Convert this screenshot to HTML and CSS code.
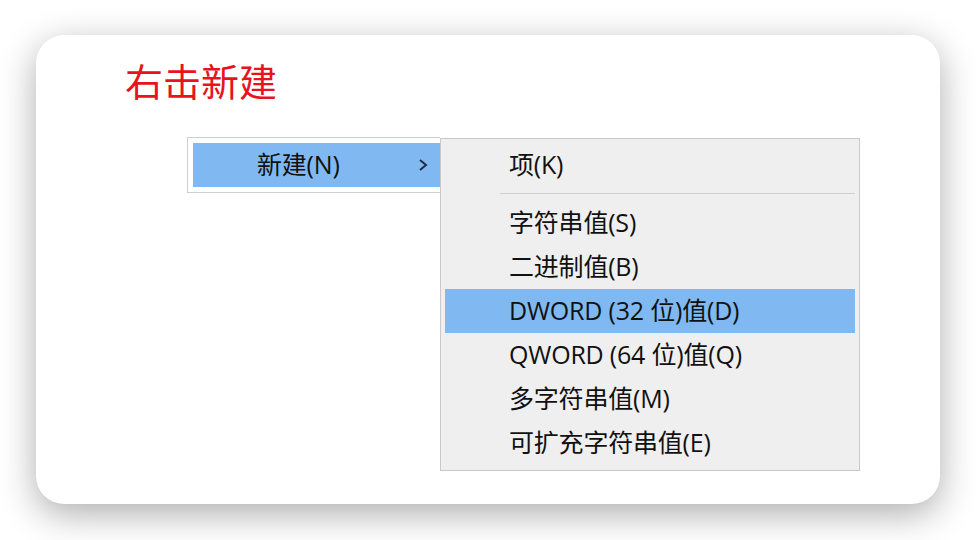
FILE: index.html
```html
<!DOCTYPE html>
<html lang="zh-CN">
<head>
<meta charset="utf-8">
<link rel="stylesheet" href="styles.css">
</head>
<body>
<div class="card">
  <h1 class="title">右击新建</h1>
  <div class="menus">
    <div class="menu">
      <div class="item active parent">
        <span class="label">新建(N)</span>
        <svg class="chev" width="10" height="14" viewBox="0 0 10 14"><polyline points="2,2 8,7 2,12" fill="none" stroke="#1f2d44" stroke-width="2"/></svg>
      </div>
    </div>
    <div class="submenu">
      <div class="item">项(K)</div>
      <div class="sep"></div>
      <div class="item">字符串值(S)</div>
      <div class="item">二进制值(B)</div>
      <div class="item active">DWORD (32 位)值(D)</div>
      <div class="item">QWORD (64 位)值(Q)</div>
      <div class="item">多字符串值(M)</div>
      <div class="item">可扩充字符串值(E)</div>
    </div>
  </div>
</div>
</body>
</html>
```
FILE: styles.css
```css
html, body {
  margin: 0;
  padding: 0;
  background: #ffffff;
}
body {
  width: 976px;
  height: 540px;
  padding: 35px 0 0 36px;
  box-sizing: border-box;
  overflow: hidden;
  font-family: "Noto Sans CJK SC", "Noto Sans", sans-serif;
}
.card {
  width: 904px;
  height: 469px;
  background: #ffffff;
  border-radius: 28px;
  box-shadow: 0 10px 36px rgba(0, 0, 0, 0.32);
  box-sizing: border-box;
  padding: 21px 0 0 89px;
}
.title {
  margin: 0;
  font-size: 38px;
  font-weight: 400;
  line-height: 48px;
  color: #e8131f;
}
.menus {
  display: flex;
  align-items: flex-start;
  margin: 33px 0 0 62px;
}
.menu {
  width: 253px;
  box-sizing: border-box;
  border: 1px solid #cfcfcf;
  border-right: none;
  padding: 5px 0 5px 5px;
  background: #ffffff;
}
.item {
  height: 44px;
  box-sizing: border-box;
  line-height: 42px;
  padding-bottom: 2px;
  padding-left: 64px;
  font-family: "Open Sans", "Noto Sans CJK SC", sans-serif;
  font-size: 25px;
  letter-spacing: -0.2px;
  color: #111111;
  white-space: nowrap;
}
.item.active {
  background: #80b9f1;
}
.parent {
  display: flex;
  align-items: center;
  justify-content: space-between;
  padding-right: 12px;
  padding-bottom: 0;
}
.parent .label {
  line-height: 42px;
  margin-top: -2px;
}
.chev {
  display: block;
}
.submenu {
  width: 420px;
  box-sizing: border-box;
  margin-top: 1px;
  border: 1px solid #c9c9c9;
  background: #efefef;
  padding: 4px 4px 5px 4px;
}
.sep {
  height: 1px;
  background: #cfcfcf;
  margin: 6px 0 7px 55px;
}
```
